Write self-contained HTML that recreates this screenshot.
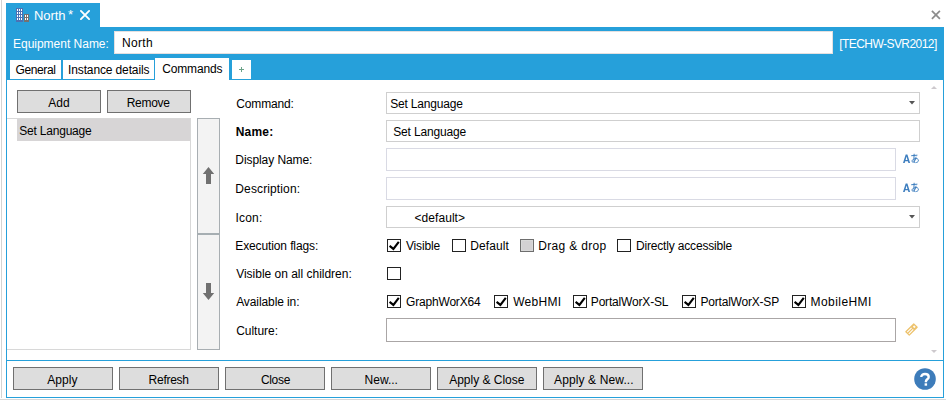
<!DOCTYPE html>
<html><head><meta charset="utf-8">
<style>
html,body{margin:0;padding:0;width:946px;height:402px;overflow:hidden;background:#fff;}
body{position:relative;font-family:"Liberation Sans",sans-serif;font-size:12px;color:#000;}
.a{position:absolute;}
.t{position:absolute;white-space:pre;line-height:14px;}
.blue{background:#26a0da;}
.inp{position:absolute;box-sizing:border-box;border:1px solid #cfcfcf;background:#fff;}
.btn{position:absolute;box-sizing:border-box;border:1px solid #707070;background:#dddddd;}
.cb{position:absolute;box-sizing:border-box;width:14px;height:13px;border:1px solid #222;background:#fff;}
.cb svg{position:absolute;left:0;top:0;}
</style></head><body>

<div class="a" style="left:1px;top:0;width:1px;height:398px;background:#d4d4d4"></div>
<div class="a" style="left:0;top:399px;width:946px;height:1px;background:#d8d8d8"></div>
<div class="a blue" style="left:6px;top:3px;width:94px;height:24px"></div>
<svg class="a" style="left:930px;top:9px" width="12" height="12" viewBox="0 0 12 12"><path d="M1.9 1.9L9.9 9.9M9.9 1.9L1.9 9.9" stroke="#8c8c8c" stroke-width="1.7"/></svg>
<div class="a blue" style="left:6px;top:27px;width:938px;height:53px"></div>
<div class="a" style="left:6px;top:79px;width:938px;height:319px;box-sizing:border-box;border:1px solid #26a0da;background:#fff"></div>
<svg class="a" style="left:16px;top:8px" width="13" height="14" viewBox="0 0 13 14" shape-rendering="crispEdges"><rect x="0" y="0" width="7" height="14" fill="#4b72b4"/><rect x="8" y="6" width="5" height="8" fill="#76716f"/><rect x="1" y="1" width="1" height="2" fill="#fff"/><rect x="1" y="4" width="1" height="2" fill="#fff"/><rect x="1" y="7" width="1" height="2" fill="#fff"/><rect x="1" y="10" width="1" height="2" fill="#fff"/><rect x="3" y="1" width="1" height="2" fill="#fff"/><rect x="3" y="4" width="1" height="2" fill="#fff"/><rect x="3" y="7" width="1" height="2" fill="#fff"/><rect x="3" y="10" width="1" height="2" fill="#fff"/><rect x="5" y="1" width="1" height="2" fill="#fff"/><rect x="5" y="4" width="1" height="2" fill="#fff"/><rect x="5" y="7" width="1" height="2" fill="#fff"/><rect x="5" y="10" width="1" height="2" fill="#fff"/><rect x="9" y="7" width="1" height="2" fill="#fff"/><rect x="9" y="10" width="1" height="2" fill="#fff"/><rect x="11" y="7" width="1" height="2" fill="#fff"/><rect x="11" y="10" width="1" height="2" fill="#fff"/></svg>
<svg class="a" style="left:79px;top:9px" width="12" height="12" viewBox="0 0 12 12"><path d="M1.9 1.9L10.1 10.1M10.1 1.9L1.9 10.1" stroke="#fff" stroke-width="1.9" stroke-linecap="round"/></svg>
<div class="a" style="left:114px;top:31px;width:719px;height:23px;box-sizing:border-box;border:1px solid #e4e0e0;background:#fff"></div>
<div class="a" style="left:10px;top:60px;width:51px;height:19px;background:#fff"></div>
<div class="a" style="left:63px;top:60px;width:91px;height:19px;background:#fff"></div>
<div class="a" style="left:155px;top:58px;width:74px;height:23px;background:#fff"></div>
<div class="a" style="left:232px;top:60px;width:19px;height:19px;background:#fff"></div>
<svg class="a" style="left:239px;top:67px" width="5" height="5" viewBox="0 0 5 5"><path d="M2.5 0V5M0 2.5H5" stroke="#6aa287" stroke-width="1"/></svg>

<div class="btn" style="left:17px;top:90px;width:84px;height:23px"></div><div class="btn" style="left:107px;top:90px;width:84px;height:23px"></div>
<div class="a" style="left:7px;top:118px;width:184px;height:232px;box-sizing:border-box;border:1px solid #d8d8d8;border-left:none;background:#fff"></div>
<div class="a" style="left:17px;top:119px;width:173px;height:22px;background:#d7d5d6"></div>
<div class="a" style="left:197px;top:118px;width:23px;height:232px;box-sizing:border-box;border:1px solid #a8aeb2;background:#f3f3f3"></div>
<div class="a" style="left:197px;top:233px;width:23px;height:2px;background:#a6aeb2"></div>
<svg class="a" style="left:202px;top:166px" width="13" height="19" viewBox="0 0 13 19"><path d="M6.5 1L12.2 8H9V18H4V8H0.8Z" fill="#707070"/></svg>
<svg class="a" style="left:202px;top:282px" width="13" height="19" viewBox="0 0 13 19"><path d="M6.5 18L12.2 11H9V1H4V11H0.8Z" fill="#707070"/></svg>

<div class="inp" style="left:386px;top:92px;width:534px;height:22px"></div>
<svg class="a" style="left:909px;top:101px" width="6" height="4" viewBox="0 0 6 4"><path d="M0 0H6L3 3.5Z" fill="#555"/></svg>
<div class="inp" style="left:386px;top:120px;width:534px;height:22px"></div>
<div class="inp" style="left:386px;top:148px;width:510px;height:23px;border-color:#d9dae4"></div>
<svg class="a" style="left:902px;top:153px" width="18" height="11" viewBox="0 0 18 11"><path fill-rule="evenodd" d="M1 10L3.7 1.6H5.4L8.1 10H6.4L5.9 8.3H3.2L2.7 10ZM3.6 6.9H5.5L4.55 3.6Z" fill="#3d7ebf"/><g fill="none" stroke="#3d7ebf" stroke-width="1.0" stroke-linecap="round"><path d="M9.6 2.7L15 2.2"/><path d="M12.1 1.2C11.9 4 11.8 6.8 12.3 9.5"/><path d="M14 4.1C13.6 7 12 9.6 10.6 9.1C9.5 8.6 9.9 6.5 12.5 5.7C14.8 5 16.6 6 16.4 7.7C16.2 9 15 9.5 13.9 9.6"/></g></svg>
<div class="inp" style="left:386px;top:177px;width:510px;height:23px;border-color:#d9dae4"></div>
<svg class="a" style="left:902px;top:182px" width="18" height="11" viewBox="0 0 18 11"><path fill-rule="evenodd" d="M1 10L3.7 1.6H5.4L8.1 10H6.4L5.9 8.3H3.2L2.7 10ZM3.6 6.9H5.5L4.55 3.6Z" fill="#3d7ebf"/><g fill="none" stroke="#3d7ebf" stroke-width="1.0" stroke-linecap="round"><path d="M9.6 2.7L15 2.2"/><path d="M12.1 1.2C11.9 4 11.8 6.8 12.3 9.5"/><path d="M14 4.1C13.6 7 12 9.6 10.6 9.1C9.5 8.6 9.9 6.5 12.5 5.7C14.8 5 16.6 6 16.4 7.7C16.2 9 15 9.5 13.9 9.6"/></g></svg>
<div class="inp" style="left:386px;top:206px;width:534px;height:22px"></div>
<svg class="a" style="left:909px;top:215px" width="6" height="4" viewBox="0 0 6 4"><path d="M0 0H6L3 3.5Z" fill="#555"/></svg>
<div class="inp" style="left:386px;top:318px;width:510px;height:24px;border-color:#aaa6a6"></div>
<svg class="a" style="left:904px;top:322px" width="15" height="15" viewBox="0 0 15 15"><g transform="rotate(-45 7.5 7.5)"><rect x="1.3" y="4.5" width="12.4" height="6" rx="0.6" fill="#edc26c"/><rect x="2.6" y="5.8" width="6.2" height="1.1" fill="#fff"/><rect x="2.6" y="8.1" width="6.2" height="1.1" fill="#fff"/><path d="M10.6 6.6L12.2 8.4M12.2 6.6L10.6 8.4" stroke="#fff" stroke-width="0.9"/></g></svg>

<div class="cb" style="left:387px;top:239px;"><svg width="12" height="11" viewBox="0 0 12 11"><path d="M1.6 5.9L5.4 8.9L10.8 1.9" stroke="#000" stroke-width="2.1" fill="none"/></svg></div><div class="cb" style="left:452px;top:239px;"></div><div class="cb" style="left:520px;top:239px;border-color:#6e6e6e;background:#d3d1d3;box-shadow:inset 0 0 0 1px #d9d9d9"></div><div class="cb" style="left:617px;top:239px;"></div>
<div class="cb" style="left:387px;top:267px;"></div>
<div class="cb" style="left:387px;top:295px;"><svg width="12" height="11" viewBox="0 0 12 11"><path d="M1.6 5.9L5.4 8.9L10.8 1.9" stroke="#000" stroke-width="2.1" fill="none"/></svg></div><div class="cb" style="left:494px;top:295px;"><svg width="12" height="11" viewBox="0 0 12 11"><path d="M1.6 5.9L5.4 8.9L10.8 1.9" stroke="#000" stroke-width="2.1" fill="none"/></svg></div><div class="cb" style="left:573px;top:295px;"><svg width="12" height="11" viewBox="0 0 12 11"><path d="M1.6 5.9L5.4 8.9L10.8 1.9" stroke="#000" stroke-width="2.1" fill="none"/></svg></div><div class="cb" style="left:682px;top:295px;"><svg width="12" height="11" viewBox="0 0 12 11"><path d="M1.6 5.9L5.4 8.9L10.8 1.9" stroke="#000" stroke-width="2.1" fill="none"/></svg></div><div class="cb" style="left:792px;top:295px;"><svg width="12" height="11" viewBox="0 0 12 11"><path d="M1.6 5.9L5.4 8.9L10.8 1.9" stroke="#000" stroke-width="2.1" fill="none"/></svg></div>

<svg class="a" style="left:931px;top:86px" width="6" height="3" viewBox="0 0 6 3"><path d="M0 3H6L3 0Z" fill="#cdc9cd"/></svg>
<svg class="a" style="left:931px;top:350px" width="6" height="3" viewBox="0 0 6 3"><path d="M0 0H6L3 3Z" fill="#cdc9cd"/></svg>

<div class="a" style="left:7px;top:360px;width:936px;height:1px;background:#26a0da"></div>
<div class="btn" style="left:13px;top:367px;width:100px;height:23px"></div><div class="btn" style="left:119px;top:367px;width:100px;height:23px"></div><div class="btn" style="left:225px;top:367px;width:100px;height:23px"></div><div class="btn" style="left:331px;top:367px;width:100px;height:23px"></div><div class="btn" style="left:437px;top:367px;width:100px;height:23px"></div><div class="btn" style="left:543px;top:367px;width:100px;height:23px"></div>
<svg class="a" style="left:914px;top:368px" width="22" height="22" viewBox="0 0 22 22"><circle cx="11" cy="11" r="10.8" fill="#3d7cba"/><path d="M7.3 9C7.3 6.9 9 6 11 6C13.1 6 14.7 7 14.7 8.9C14.7 11.2 11.9 11.3 11.9 13.5V14.2" fill="none" stroke="#fff" stroke-width="2.4"/><rect x="10.6" y="15.3" width="2.5" height="2.4" fill="#fff"/></svg>

<div class="t" style="left:236.30px;top:97px;letter-spacing:-0.157px">Command:</div>
<div class="t" style="left:235.70px;top:125px;letter-spacing:0.200px;font-weight:bold">Name:</div>
<div class="t" style="left:235.30px;top:153px;letter-spacing:-0.075px">Display Name:</div>
<div class="t" style="left:235.30px;top:182px;letter-spacing:0.127px">Description:</div>
<div class="t" style="left:235.50px;top:211px;letter-spacing:0.200px">Icon:</div>
<div class="t" style="left:235.30px;top:239px;letter-spacing:-0.120px">Execution flags:</div>
<div class="t" style="left:236.20px;top:267px;letter-spacing:-0.013px">Visible on all children:</div>
<div class="t" style="left:236.20px;top:295px;letter-spacing:-0.100px">Available in:</div>
<div class="t" style="left:236.20px;top:324px;letter-spacing:-0.029px">Culture:</div>
<div class="t" style="left:406.00px;top:239px;letter-spacing:-0.167px">Visible</div>
<div class="t" style="left:470.30px;top:239px;letter-spacing:0.100px">Default</div>
<div class="t" style="left:538.30px;top:239px;letter-spacing:0.320px">Drag &amp; drop</div>
<div class="t" style="left:635.90px;top:239px;letter-spacing:-0.167px">Directly accessible</div>
<div class="t" style="left:406.00px;top:295px;letter-spacing:-0.180px">GraphWorX64</div>
<div class="t" style="left:513.20px;top:295px;letter-spacing:0.280px">WebHMI</div>
<div class="t" style="left:590.80px;top:295px;letter-spacing:-0.175px">PortalWorX-SL</div>
<div class="t" style="left:700.50px;top:295px;letter-spacing:-0.208px">PortalWorX-SP</div>
<div class="t" style="left:810.60px;top:295px;letter-spacing:0.425px">MobileHMI</div>
<div class="t" style="left:390.20px;top:97px;letter-spacing:-0.173px">Set Language</div>
<div class="t" style="left:393.20px;top:125px;letter-spacing:-0.155px">Set Language</div>
<div class="t" style="left:414.40px;top:211px;letter-spacing:0.075px">&lt;default&gt;</div>
<div class="t" style="left:19.20px;top:124px;letter-spacing:-0.200px">Set Language</div>
<div class="t" style="left:48.20px;top:96px;letter-spacing:0.100px">Add</div>
<div class="t" style="left:126.70px;top:96px;letter-spacing:-0.280px">Remove</div>
<div class="t" style="left:47.20px;top:373px;letter-spacing:0.100px">Apply</div>
<div class="t" style="left:148.60px;top:373px;letter-spacing:-0.267px">Refresh</div>
<div class="t" style="left:260.90px;top:373px;letter-spacing:-0.300px">Close</div>
<div class="t" style="left:364.50px;top:373px;letter-spacing:0.020px">New...</div>
<div class="t" style="left:449.20px;top:373px;letter-spacing:-0.017px">Apply &amp; Close</div>
<div class="t" style="left:554.00px;top:373px;letter-spacing:0.123px">Apply &amp; New...</div>
<div class="t" style="left:34.00px;top:9px;letter-spacing:-0.050px;color:#fff;font-size:13px">North</div>
<div class="t" style="left:68.00px;top:7.6px;letter-spacing:0.000px;color:#fff;font-size:13px">*</div>
<div class="t" style="left:13.00px;top:37px;letter-spacing:-0.014px;color:#fff">Equipment Name:</div>
<div class="t" style="left:122.00px;top:36px;letter-spacing:0.325px">North</div>
<div class="t" style="left:839.20px;top:37px;letter-spacing:-0.550px;color:#fff">[TECHW-SVR2012]</div>
<div class="t" style="left:15.50px;top:63px;letter-spacing:-0.383px">General</div>
<div class="t" style="left:68.00px;top:63px;letter-spacing:-0.127px">Instance details</div>
<div class="t" style="left:162.20px;top:62px;letter-spacing:-0.157px">Commands</div>
</body></html>
